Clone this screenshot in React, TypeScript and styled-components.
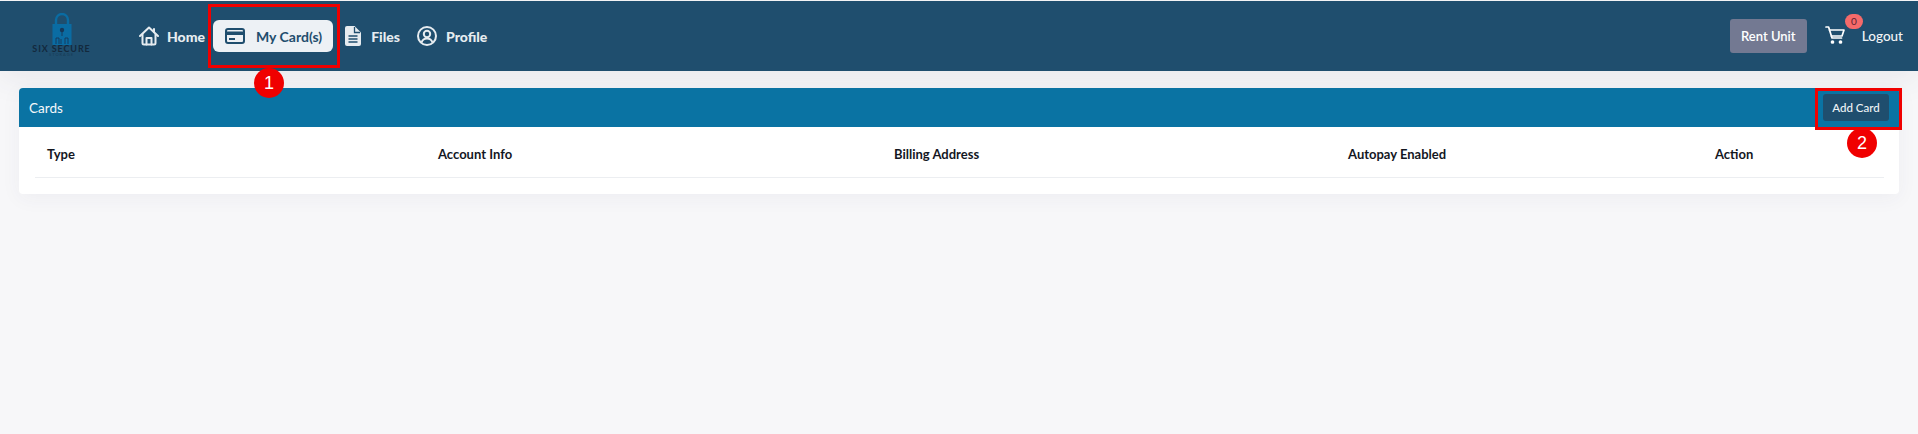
import React from "react";
import styled, { createGlobalStyle } from "styled-components";

const GlobalStyle = createGlobalStyle`
  html, body {
    margin: 0;
    padding: 0;
    background: #f7f7f9;
    font-family: "Lato", "Open Sans", sans-serif;
  }
`;

const Page = styled.div`
  position: relative;
  width: 1918px;
  height: 434px;
  overflow: hidden;
  padding-top: 1px;
  box-sizing: border-box;
`;

const TopBar = styled.header`
  height: 70px;
  background: #1f4e6e;
  display: flex;
  align-items: center;
  padding: 0 15px 0 33px;
  box-shadow: 0 8px 30px rgba(60, 60, 90, 0.08);
`;

const Logo = styled.div`
  width: 57px;
  height: 52px;
  margin-top: 6px;
  margin-right: 49px;
  display: flex;
  flex-direction: column;
  align-items: center;
`;

const LogoName = styled.span`
  font-size: 9px;
  line-height: 8px;
  font-weight: 700;
  letter-spacing: 0.9px;
  color: #13293d;
  white-space: nowrap;
`;

const LogoSub = styled.span`
  font-size: 4px;
  line-height: 4px;
  letter-spacing: 1px;
  color: #173a55;
`;

const Nav = styled.nav`
  display: flex;
  align-items: center;
`;

const NavItem = styled.a<{ $active?: boolean; $gap: number; $offset?: number }>`
  display: flex;
  align-items: center;
  gap: ${(p) => p.$gap}px;
  height: 32px;
  margin-left: ${(p) => p.$offset ?? 0}px;
  border-radius: 6px;
  font-size: 14px;
  font-weight: ${(p) => (p.$active ? 700 : 900)};
  color: ${(p) => (p.$active ? "#1f4e6e" : "#e6ecf0")};
  background: ${(p) => (p.$active ? "#edf1f5" : "transparent")};
  padding: ${(p) => (p.$active ? "0 11px 0 12px" : "0")};
  white-space: nowrap;
`;

const Right = styled.div`
  margin-left: auto;
  display: flex;
  align-items: center;
`;

const RentButton = styled.button`
  width: 77px;
  height: 34px;
  padding: 0;
  border: 0;
  border-radius: 3px;
  background: #737992;
  color: #fff;
  font: 600 13px "Lato", sans-serif;
  margin-right: 18px;
`;

const Cart = styled.div`
  position: relative;
  width: 20px;
  height: 18px;
  margin-right: 17px;
  margin-top: -2px;
`;

const Badge = styled.span`
  position: absolute;
  left: 20px;
  top: -12px;
  width: 18px;
  height: 15px;
  border-radius: 8px;
  background: #f56a6a;
  color: #5a2030;
  font-size: 10px;
  line-height: 15px;
  text-align: center;
`;

const Logout = styled.span`
  color: #f2f5f7;
  font-size: 13.5px;
  font-weight: 500;
`;

const Main = styled.main`
  padding: 17px 19px 0;
`;

const Card = styled.section`
  background: #fff;
  border-radius: 4px;
  overflow: hidden;
  box-shadow: 0 4px 20px rgba(60, 60, 90, 0.05);
  height: 106px;
`;

const CardHeader = styled.div`
  height: 39px;
  background: #0a73a3;
  display: flex;
  align-items: center;
  justify-content: space-between;
  padding: 0 10px;
  color: #f4f8fa;
  font-size: 13.5px;
`;

const AddCard = styled.button`
  width: 66px;
  height: 27px;
  padding: 0;
  border: 0;
  border-radius: 3px;
  background: #1f4e6e;
  color: #eef3f6;
  font: 500 11.5px "Lato", sans-serif;
`;

const Table = styled.div`
  margin: 0 15px 0 16px;
  padding-top: 3px;
  box-sizing: border-box;
  display: grid;
  grid-template-columns: 392px 456px 454px 367px 1fr;
  height: 51px;
  border-bottom: 1px solid #eceef1;
  align-items: center;
`;

const Th = styled.div<{ $first?: boolean }>`
  padding-left: ${(p) => (p.$first ? 12 : 11)}px;
  font-size: 13px;
  font-weight: 700;
  color: #14171f;
`;

const Callout = styled.div<{ $left: number; $top: number; $w: number; $h: number }>`
  position: absolute;
  left: ${(p) => p.$left}px;
  top: ${(p) => p.$top}px;
  width: ${(p) => p.$w}px;
  height: ${(p) => p.$h}px;
  box-sizing: border-box;
  border: 3px solid #f00000;
`;

const Step = styled.div<{ $left: number; $top: number }>`
  position: absolute;
  left: ${(p) => p.$left}px;
  top: ${(p) => p.$top}px;
  width: 30px;
  height: 30px;
  border-radius: 50%;
  background: #f00000;
  color: #fff;
  font: 400 18px/30px "Liberation Sans", sans-serif;
  text-align: center;
`;

const LogoMark = () => (
  <svg width="20" height="32" viewBox="0 0 20 32" fill="none">
    <path d="M4 13V7a6 6 0 0 1 12 0v6" stroke="#0a6ca3" strokeWidth="2.4" />
    <rect x="0.5" y="11" width="19" height="21" fill="#0a6ca3" />
    <circle cx="10" cy="17" r="2.2" fill="#16395a" />
    <path d="M10 18v5M4 31v-6h3v6M13 31v-6h3v6M9 31v-5" stroke="#16395a" strokeWidth="0.9" />
  </svg>
);

const HomeIcon = () => (
  <svg width="20" height="20" viewBox="0 0 20 20" fill="none" stroke="#e6ecf0" strokeWidth="2" strokeLinejoin="round" strokeLinecap="round">
    <path d="M1 10 10 1.500 19 10" />
    <path d="M3.500 8.500V17a1.500 1.500 0 0 0 1.500 1.500h10a1.500 1.500 0 0 0 1.500-1.500V8.500" />
    <path d="M7.500 18.500V12h5v6.500" />
    <path d="M15 3v3" />
  </svg>
);

const CardIcon = () => (
  <svg width="20" height="16" viewBox="0 0 20 16" fill="none">
    <rect x="1" y="1" width="18" height="14" rx="2" stroke="#1f4e6e" strokeWidth="2" />
    <rect x="1" y="3.500" width="18" height="3.500" fill="#1f4e6e" />
    <rect x="4" y="10" width="6" height="2" fill="#1f4e6e" />
  </svg>
);

const DocIcon = () => (
  <svg width="16" height="20" viewBox="0 0 16 20">
    <path d="M2 0h7.500L16 6.500V18a2 2 0 0 1-2 2H2a2 2 0 0 1-2-2V2a2 2 0 0 1 2-2z" fill="#e6ecf0" />
    <path d="M9.500 1v5.500H15M3.500 10h9M3.500 13h9M3.500 16h9" fill="none" stroke="#1f4e6e" strokeWidth="1.300" />
  </svg>
);

const ProfileIcon = () => (
  <svg width="20" height="20" viewBox="0 0 20 20" fill="none" stroke="#e6ecf0" strokeWidth="2">
    <circle cx="10" cy="10" r="9" />
    <circle cx="10" cy="8" r="3.200" />
    <path d="M4.500 16.500c1-3 3-4 5.500-4s4.500 1 5.500 4" />
  </svg>
);

const CartIcon = () => (
  <svg width="20" height="18" viewBox="0 0 20 18" fill="none" stroke="#fff" strokeWidth="1.700" strokeLinecap="round" strokeLinejoin="round">
    <path d="M1 1h2.600L7 12h9.500" />
    <path d="M4.500 4H19l-2 6H6.500" />
    <circle cx="7.500" cy="16" r="1" fill="#fff" />
    <circle cx="15.500" cy="16" r="1" fill="#fff" />
  </svg>
);

export default function App() {
  return (
    <Page>
      <GlobalStyle />
      <TopBar>
        <Logo>
          <LogoMark />
          <LogoName>SIX SECURE</LogoName>
          <LogoSub>STORAGE</LogoSub>
        </Logo>
        <Nav>
          <NavItem $gap={8}>
            <HomeIcon />
            Home
          </NavItem>
          <NavItem $active $gap={11} $offset={8}>
            <CardIcon />
            My Card(s)
          </NavItem>
          <NavItem $gap={10} $offset={12}>
            <DocIcon />
            Files
          </NavItem>
          <NavItem $gap={9} $offset={17}>
            <ProfileIcon />
            Profile
          </NavItem>
        </Nav>
        <Right>
          <RentButton>Rent Unit</RentButton>
          <Cart>
            <CartIcon />
            <Badge>0</Badge>
          </Cart>
          <Logout>Logout</Logout>
        </Right>
      </TopBar>
      <Main>
        <Card>
          <CardHeader>
            Cards
            <AddCard>Add Card</AddCard>
          </CardHeader>
          <Table>
            <Th $first>Type</Th>
            <Th>Account Info</Th>
            <Th>Billing Address</Th>
            <Th>Autopay Enabled</Th>
            <Th>Action</Th>
          </Table>
        </Card>
      </Main>
      <Callout $left={208} $top={4} $w={132} $h={64} />
      <Step $left={254} $top={68}>1</Step>
      <Callout $left={1815} $top={88} $w={87} $h={42} />
      <Step $left={1847} $top={128}>2</Step>
    </Page>
  );
}
